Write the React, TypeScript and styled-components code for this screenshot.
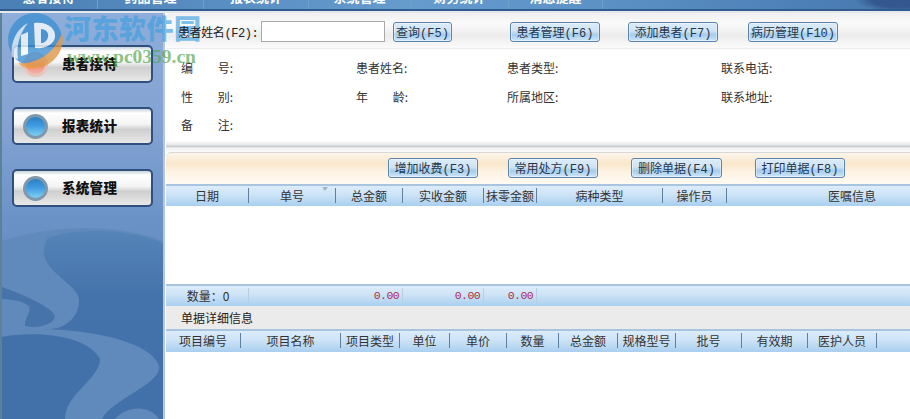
import React from 'react';
import styled, { createGlobalStyle } from 'styled-components';

const Global = createGlobalStyle`
  html, body { margin: 0; padding: 0; background: #fff; }
  * { box-sizing: border-box; }
`;

const Page = styled.div`
  width: 910px;
  height: 419px;
  overflow: hidden;
  position: relative;
  display: flex;
  flex-direction: column;
  font-family: "Noto Sans CJK SC", "Liberation Sans", sans-serif;
  font-size: 12px;
  color: #222;
`;

const TopNav = styled.div`
  height: 11px;
  flex: none;
  display: flex;
  overflow: hidden;
  background:
    radial-gradient(ellipse 45px 12px at 900px 0, #34578f 60%, transparent 100%),
    linear-gradient(90deg, #4a7fb5, #659bcd 45%, #5c92c6 65%, #4677ae);
  border-bottom: 2px solid #2f5c8c;
`;

const NavItem = styled.div<{ $w: number }>`
  width: ${p => p.$w}px;
  flex: none;
  text-align: center;
  color: #fff;
  font-weight: 700;
  font-size: 13px;
  line-height: 14px;
  margin-top: -10px;
  padding-top: 0;
  border-right: 1px solid #6f9fcc;
`;

const Body = styled.div`
  flex: 1;
  display: flex;
  min-height: 0;
  border-top: 2px solid #e4e7eb;
`;

const Sidebar = styled.div`
  width: 165px;
  flex: none;
  position: relative;
  overflow: hidden;
  padding: 32px 10px 0 10px;
  display: flex;
  flex-direction: column;
  gap: 24px;
  background: linear-gradient(180deg, #8fadd9 0%, #82a2d2 28%, #6c93c8 50%, #5f89bd 70%);
  border-left: 2px solid #5d8298;
  border-right: 2px solid #b4c6e0;
`;

const Waves = styled.svg`
  position: absolute;
  left: 0;
  bottom: 0;
`;

const SideButton = styled.div`
  position: relative;
  height: 38px;
  display: flex;
  align-items: center;
  gap: 14px;
  padding-left: 9px;
  padding-bottom: 2px;
  border: 2px solid #2f4f7c;
  border-radius: 5px;
  background: linear-gradient(180deg, #c9d3dc 0%, #fff 12%, #f4f4f4 45%, #cfcfcf 60%, #e8e8e8 100%);
  font-weight: 900;
  font-size: 13.5px;
  letter-spacing: 0.3px;
  color: #111;
`;

const Orb = styled.span<{ $active?: boolean }>`
  width: 25px;
  height: 25px;
  flex: none;
  margin-top: 2px;
  border-radius: 50%;
  border: 3px solid ${p => (p.$active ? '#e9c4b8' : '#7f98ac')};
  background: ${p =>
    p.$active
      ? 'linear-gradient(180deg, #f7d7d2 0%, #ef8f86 55%, #f6b3a8 100%)'
      : 'linear-gradient(180deg, #2d7fc2 0%, #3f9be0 45%, #7fd0f4 100%)'};
`;

const Main = styled.div`
  flex: 1;
  min-width: 0;
  display: flex;
  flex-direction: column;
  padding-left: 1px;
  background: #fff;
`;

const SearchBar = styled.div`
  height: 36px;
  flex: none;
  display: flex;
  align-items: center;
  padding: 2px 0 0 12px;
  background: linear-gradient(180deg, #f0f0f0 0%, #fafafa 30%, #ececec 65%, #fbfbfb 100%);
  border-bottom: 1px solid #ececec;
  border-radius: 5px 0 0 0;
`;

const SearchLabel = styled.span`
  width: 80px;
  flex: none;
  font-family: "Liberation Mono", "Noto Sans CJK SC", monospace;
  font-size: 12px;
  letter-spacing: -0.4px;
  color: #222;
  white-space: nowrap;
  position: relative;
  z-index: 2;
`;

const SearchInput = styled.div`
  width: 124px;
  height: 21px;
  flex: none;
  margin-left: 3px;
  background: #fff;
  border: 1px solid #a9a9a9;
`;

const FlatButton = styled.div<{ $w: number; $ml: number }>`
  width: ${p => p.$w}px;
  margin-left: ${p => p.$ml}px;
  height: 20px;
  flex: none;
  display: flex;
  align-items: center;
  justify-content: center;
  border: 1px solid #5d83ad;
  border-radius: 3px;
  font-family: "Liberation Mono", "Noto Sans CJK SC", monospace;
  font-size: 12px;
  color: #26364a;
  white-space: nowrap;
  background: linear-gradient(180deg, #dcecf8 0%, #cfe3f4 45%, #a3cdee 65%, #cfe6f8 100%);
  box-shadow: inset 0 0 0 1px rgba(255, 255, 255, 0.4);
`;

const InfoPanel = styled.div`
  height: 92px;
  flex: none;
  display: grid;
  grid-template-columns: 175px 151px 214px 1fr;
  grid-template-rows: 28px 30px 26px;
  padding: 4px 0 0 15px;
  background: #fff;
`;

const InfoCell = styled.div`
  display: flex;
  align-items: center;
  font-size: 12px;
  color: #333;
`;

const InfoKey = styled.span`
  width: 52px;
  display: flex;
  justify-content: space-between;
`;

const Splitter = styled.div`
  height: 11px;
  flex: none;
  background: linear-gradient(180deg, #fbfbfb 0%, #ececec 30%, #c9ced2 50%, #f2f2f2 65%, #fafafa 100%);
`;

const ActionBar = styled.div`
  height: 32px;
  flex: none;
  display: flex;
  align-items: center;
  padding: 0 0 2px 222px;
  border-top: 1px solid #d8d8d8;
  border-radius: 5px 0 0 0;
  background: linear-gradient(180deg, #fdf6ea 0%, #f9e6cb 35%, #fdf3e3 60%, #fffaf3 100%);
`;

const GridRow = styled.div<{ $h: number }>`
  height: ${p => p.$h}px;
  flex: none;
  display: flex;
  align-items: center;
  padding-bottom: 2px;
  border-top: 2px solid #a9c4de;
  background: linear-gradient(180deg, #dcecfa 0%, #cfe4f7 40%, #a9cfef 100%);
  font-size: 12px;
  color: #333;
`;

const Col = styled.div<{ $w: number; $last?: boolean }>`
  width: ${p => p.$w}px;
  flex: none;
  height: 15px;
  line-height: 15px;
  text-align: center;
  white-space: nowrap;
  border-right: ${p => (p.$last ? 'none' : '1px solid #5f7f9c')};
`;

const SumCol = styled(Col)`
  text-align: right;
  padding-right: 3px;
  color: #b02a4c;
  font-family: "Liberation Mono", monospace;
  font-size: 11.5px;
  letter-spacing: -0.6px;
  border-right-color: #b8cfe2;
`;

const CountCol = styled(Col)`
  padding-left: 2px;
  color: #333;
  border-right-color: #b8cfe2;
`;

const Blank = styled.div<{ $h?: number }>`
  flex: ${p => (p.$h ? 'none' : 1)};
  height: ${p => (p.$h ? `${p.$h}px` : 'auto')};
  background: #fff;
`;

const DetailTitle = styled.div`
  height: 23px;
  flex: none;
  display: flex;
  align-items: center;
  padding-left: 15px;
  background: #ebebeb;
  font-size: 12px;
  color: #222;
`;

const SortMark = styled.span`
  position: absolute;
  left: 322px;
  top: 187px;
  width: 0;
  height: 0;
  border-left: 3px solid transparent;
  border-right: 3px solid transparent;
  border-top: 4px solid #9fb6cb;
`;

const Watermark = styled.div`
  position: absolute;
  left: 4px;
  top: 11px;
  width: 200px;
  height: 60px;
  pointer-events: none;
  opacity: 0.82;
`;

const WatermarkName = styled.span`
  position: absolute;
  left: 60px;
  top: 1px;
  font-weight: 900;
  font-size: 27px;
  line-height: 32px;
  letter-spacing: 0.5px;
  white-space: nowrap;
  color: rgba(60, 160, 225, 0.8);
`;

const WatermarkUrl = styled.span`
  position: absolute;
  left: 63px;
  top: 35px;
  font-family: "Liberation Serif", serif;
  font-weight: 700;
  font-size: 19.5px;
  line-height: 22px;
  white-space: nowrap;
  color: rgba(90, 170, 80, 0.85);
`;

const navItems = [
  { label: '患者接待', w: 98 },
  { label: '药品管理', w: 106 },
  { label: '报表统计', w: 105 },
  { label: '系统管理', w: 102 },
  { label: '财务统计', w: 98 },
  { label: '消息提醒', w: 94 },
];

const mainCols = [
  { t: '日期', w: 83 },
  { t: '单号', w: 87 },
  { t: '总金额', w: 67 },
  { t: '实收金额', w: 81 },
  { t: '抹零金额', w: 53 },
  { t: '病种类型', w: 126 },
  { t: '操作员', w: 64 },
];

const detailCols = [
  { t: '项目编号', w: 75 },
  { t: '项目名称', w: 100 },
  { t: '项目类型', w: 59 },
  { t: '单位', w: 50 },
  { t: '单价', w: 57 },
  { t: '数量', w: 52 },
  { t: '总金额', w: 59 },
  { t: '规格型号', w: 58 },
  { t: '批号', w: 66 },
  { t: '有效期', w: 66 },
  { t: '医护人员', w: 69 },
];

export default function App() {
  return (
    <Page>
      <Global />
      <TopNav>
        {navItems.map(n => (
          <NavItem key={n.label} $w={n.w}>{n.label}</NavItem>
        ))}
      </TopNav>
      <Body>
        <Sidebar>
          <Waves width="161" height="200" viewBox="0 0 161 200">
            <defs>
              <linearGradient id="waveDark" x1="0" y1="0" x2="0" y2="1">
                <stop offset="0" stopColor="#5584b9" />
                <stop offset="0.35" stopColor="#4472aa" />
                <stop offset="1" stopColor="#4270a8" />
              </linearGradient>
            </defs>
            <path d="M0 22C50 5 120 5 161 22V200H0Z" fill="#6089bc" />
            <path d="M45 20C70 8 130 10 161 24V200H100C110 180 160 165 157 147C150 125 100 112 43 110C60 112 78 100 77 80C75 65 45 55 42 35C42 28 43 24 45 20Z" fill="url(#waveDark)" />
            <path d="M0 118C30 112 85 115 98 140C98 160 63 175 63 200H0Z" fill="#4270a8" />
            <path d="M0 68C20 75 50 88 53 97C52 106 35 110 23 107C22 100 30 92 27 87C20 82 10 80 0 80Z" fill="#4673a9" />
            <path d="M113 200C125 186 148 186 157 200Z" fill="#6089bc" />
          </Waves>
          <SideButton><Orb $active />患者接待</SideButton>
          <SideButton><Orb />报表统计</SideButton>
          <SideButton><Orb />系统管理</SideButton>
        </Sidebar>
        <Main>
          <SearchBar>
            <SearchLabel>患者姓名(F2):</SearchLabel>
            <SearchInput />
            <FlatButton $w={59} $ml={8}>查询(F5)</FlatButton>
            <FlatButton $w={90} $ml={58}>患者管理(F6)</FlatButton>
            <FlatButton $w={90} $ml={28}>添加患者(F7)</FlatButton>
            <FlatButton $w={90} $ml={30}>病历管理(F10)</FlatButton>
          </SearchBar>
          <InfoPanel>
            <InfoCell><InfoKey><span>编</span><span>号:</span></InfoKey></InfoCell>
            <InfoCell>患者姓名:</InfoCell>
            <InfoCell>患者类型:</InfoCell>
            <InfoCell>联系电话:</InfoCell>
            <InfoCell><InfoKey><span>性</span><span>别:</span></InfoKey></InfoCell>
            <InfoCell><InfoKey><span>年</span><span>龄:</span></InfoKey></InfoCell>
            <InfoCell>所属地区:</InfoCell>
            <InfoCell>联系地址:</InfoCell>
            <InfoCell><InfoKey><span>备</span><span>注:</span></InfoKey></InfoCell>
          </InfoPanel>
          <Splitter />
          <ActionBar>
            <FlatButton $w={90} $ml={0}>增加收费(F3)</FlatButton>
            <FlatButton $w={90} $ml={30}>常用处方(F9)</FlatButton>
            <FlatButton $w={91} $ml={33}>删除单据(F4)</FlatButton>
            <FlatButton $w={90} $ml={33}>打印单据(F8)</FlatButton>
          </ActionBar>
          <GridRow $h={22}>
            {mainCols.map(c => (
              <Col key={c.t} $w={c.w}>{c.t}</Col>
            ))}
            <Col $w={250} $last>医嘱信息</Col>
          </GridRow>
          <Blank $h={78} />
          <GridRow $h={22}>
            <CountCol $w={83}>数量：0</CountCol>
            <SumCol $w={154}>0.00</SumCol>
            <SumCol $w={81}>0.00</SumCol>
            <SumCol $w={53}>0.00</SumCol>
          </GridRow>
          <DetailTitle>单据详细信息</DetailTitle>
          <GridRow $h={23}>
            {detailCols.map(c => (
              <Col key={c.t} $w={c.w}>{c.t}</Col>
            ))}
          </GridRow>
          <Blank />
        </Main>
      </Body>
      <SortMark />
      <Watermark>
        <svg width="62" height="62" viewBox="0 0 62 62">
          <circle cx="31" cy="29" r="27" fill="#3d8fd2" opacity="0.95" />
          <path d="M58 22C62 38 50 56 30 58C24 58 18 56 14 52C30 54 50 44 58 22Z" fill="#ef9a3c" opacity="0.9" />
          <path d="M8 46C6 32 12 18 24 12C16 22 12 34 14 48Z" fill="#e8f1f9" opacity="0.9" />
          <path d="M17 24L24 21V43L17 45Z" fill="#fff" opacity="0.95" />
          <path d="M30 12C44 10 52 18 51 26C50 33 42 38 31 37Z" fill="#fff" opacity="0.95" />
          <path d="M37 18C42 18 45 22 44 26C43 30 40 32 37 32Z" fill="#3d8fd2" />
        </svg>
        <WatermarkName>河东软件园</WatermarkName>
        <WatermarkUrl>www.pc0359.cn</WatermarkUrl>
      </Watermark>
    </Page>
  );
}
